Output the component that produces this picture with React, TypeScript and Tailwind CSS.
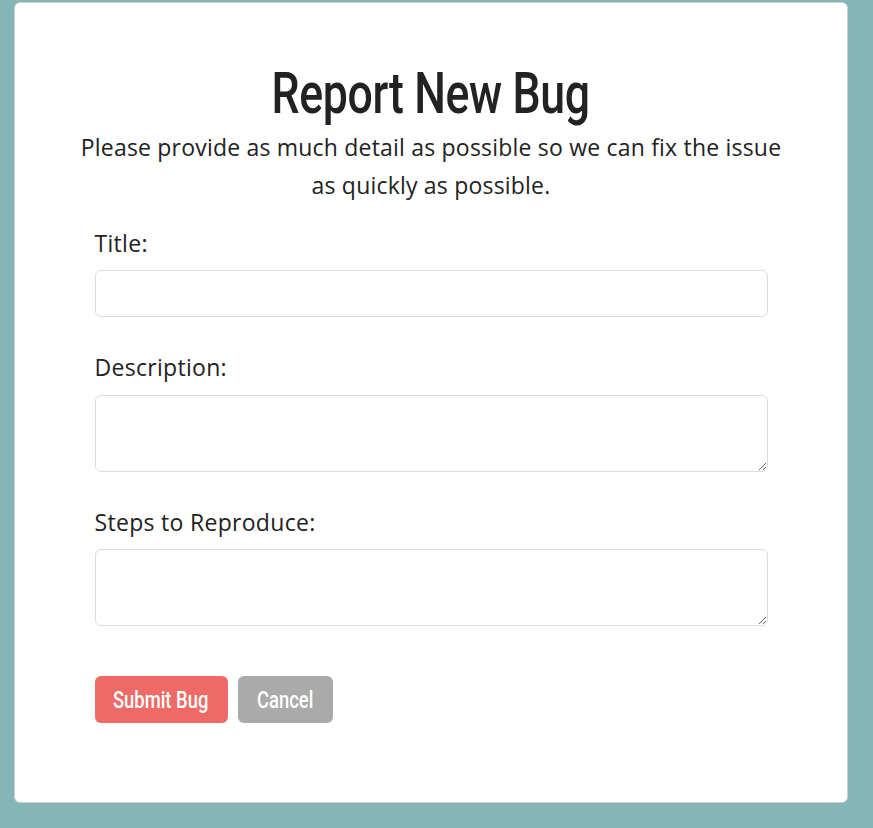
import React from 'react';

const condensed = {
  fontFamily: 'Roboto, "Liberation Sans", sans-serif',
};
const body = { fontFamily: '"Open Sans", "Noto Sans", sans-serif' };

export default function App() {
  return (
    <div className="min-h-[828px] w-full bg-[#84b6b8] pl-[14px] pt-[2px]">
      <div className="flex h-[801px] w-[834px] flex-col items-center rounded-[6px] border border-[#cfcfcf] bg-white pt-[60px] text-[#222]">
        <h1
          className="inline-block origin-center scale-x-[0.77] text-[58px] leading-[60px] font-medium tracking-[-0.5px]"
          style={condensed}
        >
          Report New Bug
        </h1>
        <p className="mt-[5px] w-[712px] text-center text-[23px] leading-[38px] tracking-[0.2px]" style={body}>
          Please provide as much detail as possible so we can fix the issue as quickly as possible.
        </p>
        <form className="mt-[23px] flex w-[673px] flex-col text-[23px] tracking-[0.3px]" style={body}>
          <label className="leading-[33px]">Title:</label>
          <input
            type="text"
            className="mt-[10px] h-[47px] rounded-[6px] border border-[#dcdce0] px-3 outline-none"
          />
          <label className="mt-[34px] leading-[33px]">Description:</label>
          <textarea className="mt-[11px] h-[77px] rounded-[6px] border border-[#dcdce0] px-3 outline-none" />
          <label className="mt-[34px] leading-[33px]">Steps to Reproduce:</label>
          <textarea className="mt-[10px] h-[77px] rounded-[6px] border border-[#dcdce0] px-3 outline-none" />
          <div className="mt-[50px] flex gap-[10px]">
            <button
              type="button"
              className="flex h-[47px] w-[133px] items-center justify-center rounded-[6px] bg-[#ed6a66] pt-[3px] text-white"
            >
              <span className="inline-block scale-x-[0.8] text-[23px] font-medium tracking-normal" style={condensed}>
                Submit Bug
              </span>
            </button>
            <button
              type="button"
              className="flex h-[47px] w-[95px] items-center justify-center rounded-[6px] bg-[#aaaaaa] pt-[3px] text-white"
            >
              <span className="inline-block scale-x-[0.8] text-[23px] font-medium tracking-normal" style={condensed}>
                Cancel
              </span>
            </button>
          </div>
        </form>
      </div>
    </div>
  );
}
